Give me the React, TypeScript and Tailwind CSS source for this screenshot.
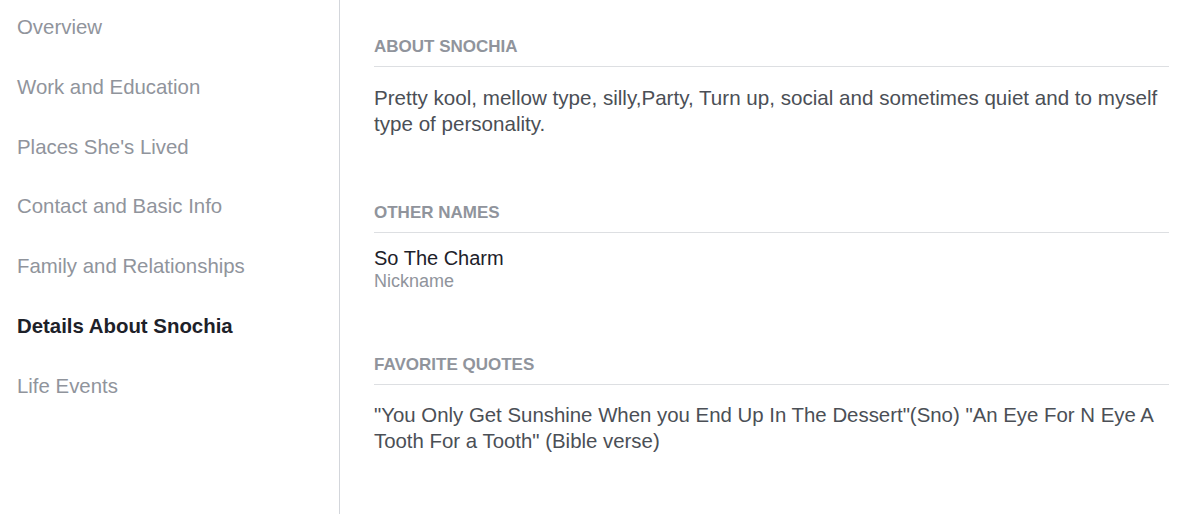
import React from "react";

const nav = [
  "Overview",
  "Work and Education",
  "Places She's Lived",
  "Contact and Basic Info",
  "Family and Relationships",
  "Details About Snochia",
  "Life Events",
];

function Header({ children }: { children: React.ReactNode }) {
  return (
    <div className="border-b border-[#dddfe2] pb-[9px] text-[17px] font-bold leading-[20px] text-[#90949c]">
      {children}
    </div>
  );
}

export default function App() {
  return (
    <div
      className="flex h-[514px] w-[1200px] overflow-hidden bg-white"
      style={{ fontFamily: '"Liberation Sans", Arial, sans-serif' }}
    >
      <div className="w-[340px] shrink-0 border-r border-[#d3d6db] pl-[17px]">
        <ul className="-mt-[2px] flex flex-col">
          {nav.map((n) => (
            <li
              key={n}
              className={
                "text-[20.4px] leading-[59.8px] " +
                (n === "Details About Snochia"
                  ? "font-bold text-[#1d2129]"
                  : "text-[#90949c]")
              }
            >
              {n}
            </li>
          ))}
        </ul>
      </div>
      <div className="flex-1 pl-[34px] pr-[31px] pt-[37px]">
        <section>
          <Header>ABOUT SNOCHIA</Header>
          <p className="pt-[18px] text-[20.6px] leading-[26px] text-[#4b4f56]">
            Pretty kool, mellow type, silly,Party, Turn up, social and sometimes quiet and to myself type of personality.
          </p>
        </section>
        <section className="pt-[66px]">
          <Header>OTHER NAMES</Header>
          <div className="pt-[13px]">
            <div className="text-[20px] leading-[24px] text-[#1d2129]">So The Charm</div>
            <div className="text-[18px] leading-[22px] text-[#90949c]">Nickname</div>
          </div>
        </section>
        <section className="pt-[63px]">
          <Header>FAVORITE QUOTES</Header>
          <p className="pt-[17px] text-[20.4px] leading-[26px] text-[#4b4f56]">
            "You Only Get Sunshine When you End Up In The Dessert"(Sno) "An Eye For N Eye A Tooth For a Tooth" (Bible verse)
          </p>
        </section>
      </div>
    </div>
  );
}
